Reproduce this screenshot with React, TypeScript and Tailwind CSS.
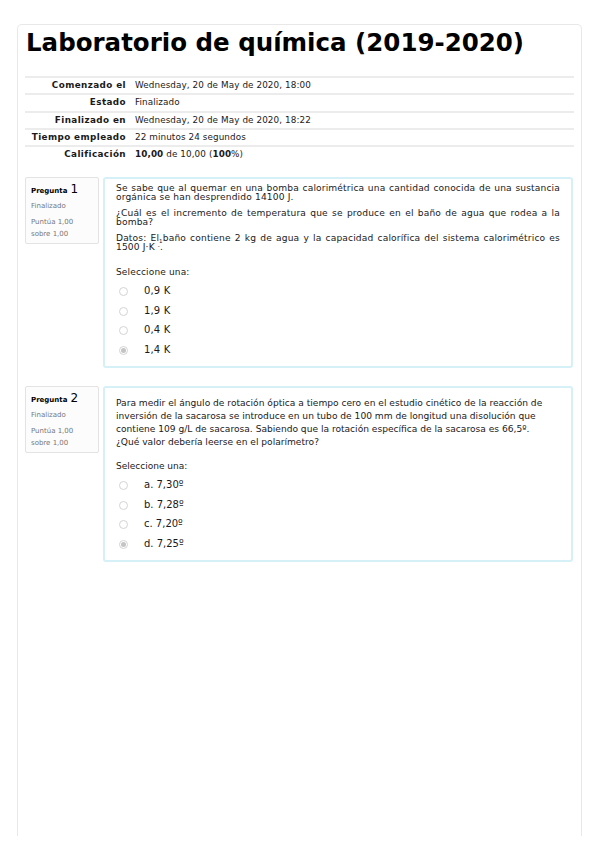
const font = { fontFamily: '"DejaVu Sans", Verdana, sans-serif' }

const summary: [string, React.ReactNode][] = [
  ['Comenzado el', 'Wednesday, 20 de May de 2020, 18:00'],
  ['Estado', 'Finalizado'],
  ['Finalizado en', 'Wednesday, 20 de May de 2020, 18:22'],
  ['Tiempo empleado', '22 minutos 24 segundos'],
  [
    'Calificación',
    <>
      <b>10,00</b> de 10,00 (<b>100</b>%)
    </>,
  ],
]

function Radio({ checked }: { checked?: boolean }) {
  return (
    <span className="flex h-[9px] w-[9px] items-center justify-center rounded-full border border-[#d4d4d4] bg-white">
      {checked && <span className="h-[5px] w-[5px] rounded-full bg-[#c4c4c4]" />}
    </span>
  )
}

function Info({ n }: { n: number }) {
  return (
    <div className="h-[67px] w-[74px] shrink-0 rounded-[2px] border border-[#e3e3e3] bg-[#fcfcfc] px-[5px] pt-[5px] text-[7px] leading-none text-[#555]">
      <div className="flex items-baseline gap-[3px] text-black">
        <span className="font-bold">Pregunta</span>
        <span className="text-[12px]">{n}</span>
      </div>
      <div className="mt-[8px] text-[#777]">Finalizado</div>
      <div className="mt-[9px] text-[#777]">Puntúa 1,00</div>
      <div className="mt-[5px] text-[#777]">sobre 1,00</div>
    </div>
  )
}

function Options({ items, top }: { items: string[]; top: string }) {
  return (
    <div className={top}>
      <div className="text-[9px] leading-none">Seleccione una:</div>
      <div className="mt-[9px] flex flex-col gap-[9px]">
        {items.map((t, i) => (
          <div key={t} className="flex items-center pl-[3px] text-[10px] leading-[10.5px]">
            <Radio checked={i === items.length - 1} />
            <span className="ml-[16px]">{t}</span>
          </div>
        ))}
      </div>
    </div>
  )
}

export default function App() {
  return (
    <div className="h-[848px] w-[599px] bg-white pt-[24px] text-[#1a1a1a]" style={font}>
      <div className="ml-[17px] h-[812px] w-[565px] rounded-t-[5px] border border-b-0 border-[#e8e8e8] px-[7px]">
        <h1 className="pt-[3px] pl-[1px] text-[24.5px] font-bold leading-[30px] text-black">
          Laboratorio de química (2019-2020)
        </h1>

        <div className="mt-[18px] w-[549px]">
          {summary.map(([k, v]) => (
            <div key={k} className="flex h-[17.3px] items-center border-t-2 border-[#ececec] text-[8.8px]">
              <div className="w-[101px] text-right font-bold tracking-[0.4px]">{k}</div>
              <div className="ml-[9px] tracking-[0.1px]">{v}</div>
            </div>
          ))}
        </div>

        <div className="mt-[15px] flex gap-[4px]">
          <Info n={1} />
          <div className="h-[191px] w-[470px] rounded-[3px] border-2 border-[#d6f0f7] px-[11px] pt-[5px] text-[9.1px] leading-[9px] tracking-[0.15px]">
            <p className="text-justify">
              Se sabe que al quemar en una bomba calorimétrica una cantidad conocida de una sustancia orgánica se han
              desprendido 14100 J.
            </p>
            <p className="mt-[7px] text-justify">
              ¿Cuál es el incremento de temperatura que se produce en el baño de agua que rodea a la bomba?
            </p>
            <p className="mt-[7px] text-justify">
              Datos: El<sub className="text-[5.5px]">1</sub>baño contiene 2 kg de agua y la capacidad calorífica del
              sistema calorimétrico es 1500 J·K <sup className="text-[5.5px]">-</sup>.
            </p>
            <Options top="mt-[16px]" items={['0,9 K', '1,9 K', '0,4 K', '1,4 K']} />
          </div>
        </div>

        <div className="mt-[18px] flex gap-[4px]">
          <Info n={2} />
          <div className="h-[176px] w-[470px] rounded-[3px] border-2 border-[#d6f0f7] px-[11px] pt-[9px] text-[9.1px] leading-[12.7px]">
            <p>
              Para medir el ángulo de rotación óptica a tiempo cero en el estudio cinético de la reacción de inversión de
              la sacarosa se introduce en un tubo de 100 mm de longitud una disolución que contiene 109 g/L de sacarosa.
              Sabiendo que la rotación específica de la sacarosa es 66,5º.
              <br />
              ¿Qué valor debería leerse en el polarímetro?
            </p>
            <Options top="mt-[14px]" items={['a. 7,30º', 'b. 7,28º', 'c. 7,20º', 'd. 7,25º']} />
          </div>
        </div>
      </div>
    </div>
  )
}
